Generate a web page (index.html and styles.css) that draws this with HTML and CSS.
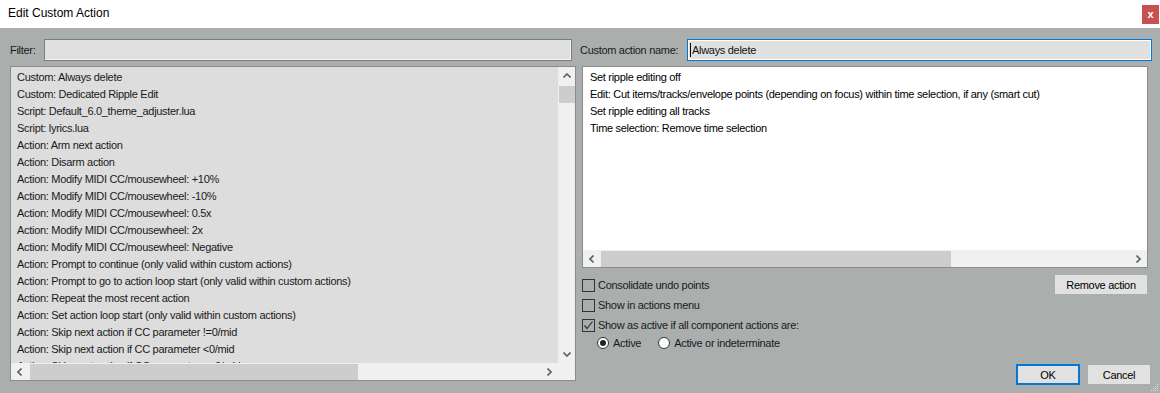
FILE: index.html
```html
<!DOCTYPE html>
<html lang="en">
<head>
  <meta charset="UTF-8" />
  <meta name="viewport" content="width=device-width, initial-scale=1.0"/>
  <title>Edit Custom Action</title>
  <link rel="stylesheet" href="styles.css">
</head>
<body>
  <div class="titlebar">
    <span class="title">Edit Custom Action</span>
    <span class="close">x</span>
  </div>

  <div class="dialog">
    <!-- left side: action picker -->
    <div class="col-left">
      <div class="field-row">
        <span class="label filter-label">Filter:</span>
        <div class="input filter-input"></div>
      </div>

      <div class="list list-actions">
        <div class="rows">
          <div class="row">Custom: Always delete</div>
          <div class="row">Custom: Dedicated Ripple Edit</div>
          <div class="row">Script: Default_6.0_theme_adjuster.lua</div>
          <div class="row">Script: lyrics.lua</div>
          <div class="row">Action: Arm next action</div>
          <div class="row">Action: Disarm action</div>
          <div class="row">Action: Modify MIDI CC/mousewheel: +10%</div>
          <div class="row">Action: Modify MIDI CC/mousewheel: -10%</div>
          <div class="row">Action: Modify MIDI CC/mousewheel: 0.5x</div>
          <div class="row">Action: Modify MIDI CC/mousewheel: 2x</div>
          <div class="row">Action: Modify MIDI CC/mousewheel: Negative</div>
          <div class="row">Action: Prompt to continue (only valid within custom actions)</div>
          <div class="row">Action: Prompt to go to action loop start (only valid within custom actions)</div>
          <div class="row">Action: Repeat the most recent action</div>
          <div class="row">Action: Set action loop start (only valid within custom actions)</div>
          <div class="row">Action: Skip next action if CC parameter !=0/mid</div>
          <div class="row">Action: Skip next action if CC parameter &lt;0/mid</div>
          <div class="row">Action: Skip next action if CC parameter &lt;=0/mid</div>
        </div>
        <div class="vscroll">
          <span class="arrow"><svg width="8" height="5" viewBox="0 0 8 5"><polyline points="0.5,4.5 4,1 7.5,4.5" /></svg></span>
          <span class="vthumb"></span>
          <span class="spacer"></span>
          <span class="arrow"><svg width="8" height="5" viewBox="0 0 8 5"><polyline points="0.5,0.5 4,4 7.5,0.5" /></svg></span>
        </div>
        <div class="hscroll">
          <span class="arrow"><svg width="5" height="8" viewBox="0 0 5 8"><polyline points="4.5,0.5 1,4 4.5,7.5" /></svg></span>
          <span class="hthumb thumb-left"></span>
          <span class="spacer"></span>
          <span class="arrow"><svg width="5" height="8" viewBox="0 0 5 8"><polyline points="0.5,0.5 4,4 0.5,7.5" /></svg></span>
        </div>
        <div class="corner"></div>
      </div>
    </div>

    <!-- right side: the custom action -->
    <div class="col-right">
      <div class="field-row">
        <span class="label name-label">Custom action name:</span>
        <div class="input name-input"><span class="caret"></span>Always delete</div>
      </div>

      <div class="list list-steps">
        <div class="rows">
          <div class="row">Set ripple editing off</div>
          <div class="row">Edit: Cut items/tracks/envelope points (depending on focus) within time selection, if any (smart cut)</div>
          <div class="row">Set ripple editing all tracks</div>
          <div class="row">Time selection: Remove time selection</div>
        </div>
        <div class="hscroll">
          <span class="arrow"><svg width="5" height="8" viewBox="0 0 5 8"><polyline points="4.5,0.5 1,4 4.5,7.5" /></svg></span>
          <span class="hthumb thumb-right"></span>
          <span class="spacer"></span>
          <span class="arrow"><svg width="5" height="8" viewBox="0 0 5 8"><polyline points="0.5,0.5 4,4 0.5,7.5" /></svg></span>
        </div>
      </div>

      <div class="options">
        <div class="checks">
          <div class="check"><span class="box"></span>Consolidate undo points</div>
          <div class="check"><span class="box"></span>Show in actions menu</div>
          <div class="check"><span class="box"><svg width="11" height="11" viewBox="0 0 11 11"><polyline points="1.5,5.5 4,8.5 9.5,1.5" /></svg></span>Show as active if all component actions are:</div>
          <div class="radios">
            <span class="radio-item"><span class="radio on"></span>Active</span>
            <span class="radio-item"><span class="radio"></span>Active or indeterminate</span>
          </div>
        </div>
        <button class="btn btn-remove">Remove action</button>
      </div>

      <div class="footer">
        <button class="btn btn-ok">OK</button>
        <button class="btn btn-cancel">Cancel</button>
      </div>
    </div>
  </div>

  <svg class="grip" width="8" height="8" viewBox="0 0 8 8">
    <rect x="6" y="0" width="1" height="1"/>
    <rect x="4" y="2" width="1" height="1"/><rect x="6" y="2" width="1" height="1"/>
    <rect x="2" y="4" width="1" height="1"/><rect x="4" y="4" width="1" height="1"/><rect x="6" y="4" width="1" height="1"/>
    <rect x="0" y="6" width="1" height="1"/><rect x="2" y="6" width="1" height="1"/><rect x="4" y="6" width="1" height="1"/><rect x="6" y="6" width="1" height="1"/>
  </svg>
</body>
</html>
```

FILE: styles.css
```css
* {
  margin: 0;
  padding: 0;
  box-sizing: border-box;
}

body {
  width: 1160px;
  height: 393px;
  overflow: hidden;
  position: relative;
  background: #aaafae;
  font-family: "Liberation Sans", Arial, sans-serif;
  font-size: 11px;
  letter-spacing: -0.3px;
  color: #1a1a1a;
}

.titlebar {
  height: 28px;
  background: #fff;
  display: flex;
  align-items: flex-start;
}

.title {
  font-size: 12px;
  letter-spacing: 0;
  line-height: 26px;
  padding-left: 8px;
  color: #000;
}

.close {
  margin-left: auto;
  margin-top: 5px;
  margin-right: 1px;
  width: 17px;
  height: 19px;
  background: #c75050;
  color: #fff;
  font-weight: bold;
  font-size: 11px;
  letter-spacing: 0;
  line-height: 18px;
  text-align: center;
}

.dialog {
  display: flex;
  gap: 4px;
  padding: 11px 8px 0 10px;
}

.col-left {
  width: 566px;
  display: flex;
  flex-direction: column;
  gap: 5px;
}

.col-right {
  width: 572px;
  display: flex;
  flex-direction: column;
}

.field-row {
  display: flex;
  align-items: center;
  height: 22px;
}

.filter-label { width: 34px; }
.name-label { width: 107px; }

.input {
  height: 22px;
  background: #dfe0df;
  border: 1px solid #7d7d7d;
  box-shadow: inset -1px -1px 0 #f4f4f4;
}

.filter-input { width: 528px; }

.name-input {
  width: 465px;
  border-color: #0078d7;
  box-shadow: inset 0 0 0 1px #fff;
  display: flex;
  align-items: center;
  padding-left: 2px;
  color: #111;
}

.caret {
  width: 1px;
  height: 14px;
  background: #000;
  margin-right: 1px;
}

/* list boxes */
.list {
  border: 1px solid #8a8c8c;
  display: grid;
  overflow: hidden;
}

.list-actions {
  height: 315px;
  background: #dcdddc;
  grid-template-columns: 1fr 17px;
  grid-template-rows: 1fr 17px;
}

.list-steps {
  width: 566px;
  height: 202px;
  margin: 5px 0 0 2px;
  background: #fff;
  grid-template-rows: 1fr 17px;
  color: #000;
}

.rows {
  overflow: hidden;
  padding-top: 2px;
  white-space: nowrap;
}

.row {
  height: 17px;
  line-height: 17px;
  padding-left: 6px;
}

.list-steps .row { padding-left: 7px; }

.vscroll,
.hscroll,
.corner {
  background: #f0f0f0;
}

.vscroll {
  display: flex;
  flex-direction: column;
  align-items: center;
}

.hscroll {
  display: flex;
  align-items: center;
}

.arrow {
  width: 17px;
  height: 17px;
  display: flex;
  align-items: center;
  justify-content: center;
  flex-shrink: 0;
}

.arrow svg polyline {
  fill: none;
  stroke: #606060;
  stroke-width: 1.6;
}

.spacer { flex: 1; }

.vthumb {
  width: 16px;
  height: 17px;
  margin-top: 2px;
  background: #cdcdcd;
}

.hthumb {
  height: 16px;
  background: #cdcdcd;
}

.thumb-left { width: 328px; margin-left: 2px; }
.thumb-right { width: 350px; margin-left: 1px; }

/* options under the step list */
.options {
  display: flex;
  justify-content: space-between;
  align-items: flex-start;
  margin-top: 7px;
  padding: 0 5px 0 2px;
}

.check {
  height: 20px;
  display: flex;
  align-items: center;
  gap: 3px;
}

.box {
  width: 13px;
  height: 13px;
  border: 1px solid #333;
  display: flex;
  align-items: center;
  justify-content: center;
}

.box svg polyline {
  fill: none;
  stroke: #333;
  stroke-width: 1.2;
}

.radios {
  height: 16px;
  display: flex;
  align-items: center;
  gap: 17px;
  padding-left: 15px;
}

.radio-item {
  display: flex;
  align-items: center;
  gap: 4px;
}

.radio {
  width: 12px;
  height: 12px;
  border: 1px solid #333;
  border-radius: 50%;
  background: #fff;
  display: flex;
  align-items: center;
  justify-content: center;
}

.radio.on::after {
  content: "";
  width: 6px;
  height: 6px;
  border-radius: 50%;
  background: #222;
}

.btn {
  font-family: "Liberation Sans", Arial, sans-serif;
  font-size: 11px;
  letter-spacing: -0.3px;
  color: #000;
  background: #e1e1e1;
  border: 1px solid #e1e1e1;
}

.btn-remove {
  width: 92px;
  height: 19px;
}

.footer {
  display: flex;
  justify-content: flex-end;
  align-items: flex-start;
  gap: 8px;
  margin-top: 13px;
  padding-right: 2px;
}

.btn-ok {
  width: 64px;
  height: 21px;
  border: 2px solid #0078d7;
}

.btn-cancel {
  width: 62px;
  height: 19px;
  margin-top: 1px;
}

.grip {
  position: absolute;
  right: 1px;
  bottom: 1px;
  fill: #e4e4e4;
}
```
